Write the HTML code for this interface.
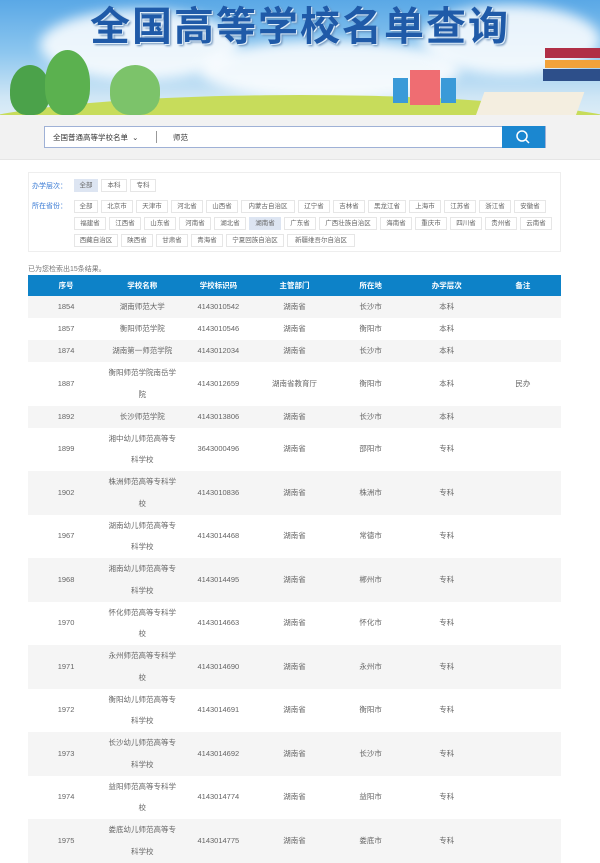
<!DOCTYPE html>
<html><head><meta charset="utf-8"><style>
*{margin:0;padding:0;box-sizing:border-box}
body{width:600px;height:859px;overflow:hidden;background:#fff;font-family:"Liberation Sans","Noto Sans CJK SC",sans-serif;color:#555;position:relative}
.banner{position:absolute;left:0;top:0;width:600px;height:130px;background:linear-gradient(180deg,#5aa8e6 0%,#8cc6ef 40%,#cfe6f5 75%,#e6f2f8 100%);overflow:hidden}
.cloud{position:absolute;background:#fff;border-radius:50%;opacity:.85;filter:blur(6px)}
.title{position:absolute;left:0;width:600px;top:-6px;text-align:center;font-size:40px;font-weight:bold;color:#1f5aa8;letter-spacing:2px;text-shadow:1px 1px 0 #dfeefa,2px 2px 2px #6a8fb8}
.grass{position:absolute;left:-50px;top:95px;width:700px;height:80px;border-radius:50% 50% 0 0;background:#c7dc5b}
.tree{position:absolute;border-radius:50% 50% 40% 40%;background:#4ba24a}
.sbar{position:absolute;left:0;top:115px;width:600px;height:45px;background:#f2f2f2;border-bottom:1px solid #e6e6e6}
.sbox{position:absolute;left:44px;top:126px;width:502px;height:22px;border:1px solid #9fb1d6;background:#fff;font-size:7.5px;color:#333}
.btn{position:absolute;right:0;top:-1px;width:43px;height:22px;background:#1b87d0}
.filter{position:absolute;left:28px;top:172px;width:533px;height:80px;border:1px solid #eee}
.lab{position:absolute;left:3px;font-size:7px;color:#3a7bd5}
.tag{position:absolute;height:13px;border:1px solid #e6e6e6;font-size:6.5px;line-height:11px;text-align:center;color:#666;background:#fff}
.tag.on{background:#dde5f2;border-color:#dde5f2}
.note{position:absolute;left:28px;top:264px;font-size:7px;color:#777}
table{position:absolute;left:28px;top:275px;width:533px;border-collapse:collapse;table-layout:fixed}
th{background:#0d82c8;color:#fff;font-size:7.5px;height:21px;font-weight:bold}
td{font-size:7.5px;text-align:center;color:#666;height:22px;line-height:22px}
tr.d td{height:43.5px;line-height:21.75px}
tr:nth-child(even) td{background:#f5f5f5}
</style></head><body>
<div class="banner">
<div class="cloud" style="left:40px;top:10px;width:200px;height:70px"></div>
<div class="cloud" style="left:200px;top:40px;width:260px;height:60px"></div>
<div class="cloud" style="left:420px;top:5px;width:180px;height:70px"></div>
<div class="grass"></div>
<div class="tree" style="left:10px;top:65px;width:40px;height:50px"></div>
<div class="tree" style="left:45px;top:50px;width:45px;height:65px;background:#5bb14f"></div>
<div class="tree" style="left:110px;top:65px;width:50px;height:50px;background:#7cc36a"></div>
<div style="position:absolute;left:393px;top:78px;width:15px;height:25px;background:#3a9ad8"></div>
<div style="position:absolute;left:410px;top:70px;width:30px;height:35px;background:#ef6d72"></div>
<div style="position:absolute;left:441px;top:78px;width:15px;height:25px;background:#3a9ad8"></div>
<div style="position:absolute;left:545px;top:48px;width:55px;height:10px;background:#b02f46"></div>
<div style="position:absolute;left:545px;top:60px;width:55px;height:8px;background:#f2a23a"></div>
<div style="position:absolute;left:543px;top:69px;width:57px;height:12px;background:#2d4f8a"></div>
<div style="position:absolute;left:480px;top:92px;width:100px;height:24px;background:#f4eee0;transform:skewX(-20deg)"></div>
<div class="title">全国高等学校名单查询</div>
</div>
<div class="sbar"></div>
<div class="sbox"><span style="position:absolute;left:8px;top:5px">全国普通高等学校名单 &nbsp;⌄</span><span style="position:absolute;left:111px;top:4px;width:1px;height:12px;background:#999"></span><span style="position:absolute;left:128px;top:5px">师范</span>
<div class="btn"><svg width="43" height="22"><circle cx="20" cy="10" r="5" fill="none" stroke="#fff" stroke-width="1.5"/><line x1="23.5" y1="13.5" x2="27" y2="17" stroke="#fff" stroke-width="1.5"/></svg></div></div>
<div class="filter">
<div class="lab" style="top:8px">办学层次：</div>
<div class="lab" style="top:28px">所在省份：</div>
<div class="tag on" style="left:45px;top:6px;width:24px">全部</div>
<div class="tag" style="left:72px;top:6px;width:26px">本科</div>
<div class="tag" style="left:101px;top:6px;width:26px">专科</div>
</div>
<div class="note">已为您检索出15条结果。</div>
<table>
<tr><th>序号</th><th>学校名称</th><th>学校标识码</th><th>主管部门</th><th>所在地</th><th>办学层次</th><th>备注</th></tr>
<tr><td>1854</td><td>湖南师范大学</td><td>4143010542</td><td>湖南省</td><td>长沙市</td><td>本科</td><td></td></tr>
<tr><td>1857</td><td>衡阳师范学院</td><td>4143010546</td><td>湖南省</td><td>衡阳市</td><td>本科</td><td></td></tr>
<tr><td>1874</td><td>湖南第一师范学院</td><td>4143012034</td><td>湖南省</td><td>长沙市</td><td>本科</td><td></td></tr>
<tr class="d"><td>1887</td><td>衡阳师范学院南岳学<br>院</td><td>4143012659</td><td>湖南省教育厅</td><td>衡阳市</td><td>本科</td><td>民办</td></tr>
<tr><td>1892</td><td>长沙师范学院</td><td>4143013806</td><td>湖南省</td><td>长沙市</td><td>本科</td><td></td></tr>
<tr class="d"><td>1899</td><td>湘中幼儿师范高等专<br>科学校</td><td>3643000496</td><td>湖南省</td><td>邵阳市</td><td>专科</td><td></td></tr>
<tr class="d"><td>1902</td><td>株洲师范高等专科学<br>校</td><td>4143010836</td><td>湖南省</td><td>株洲市</td><td>专科</td><td></td></tr>
<tr class="d"><td>1967</td><td>湖南幼儿师范高等专<br>科学校</td><td>4143014468</td><td>湖南省</td><td>常德市</td><td>专科</td><td></td></tr>
<tr class="d"><td>1968</td><td>湘南幼儿师范高等专<br>科学校</td><td>4143014495</td><td>湖南省</td><td>郴州市</td><td>专科</td><td></td></tr>
<tr class="d"><td>1970</td><td>怀化师范高等专科学<br>校</td><td>4143014663</td><td>湖南省</td><td>怀化市</td><td>专科</td><td></td></tr>
<tr class="d"><td>1971</td><td>永州师范高等专科学<br>校</td><td>4143014690</td><td>湖南省</td><td>永州市</td><td>专科</td><td></td></tr>
<tr class="d"><td>1972</td><td>衡阳幼儿师范高等专<br>科学校</td><td>4143014691</td><td>湖南省</td><td>衡阳市</td><td>专科</td><td></td></tr>
<tr class="d"><td>1973</td><td>长沙幼儿师范高等专<br>科学校</td><td>4143014692</td><td>湖南省</td><td>长沙市</td><td>专科</td><td></td></tr>
<tr class="d"><td>1974</td><td>益阳师范高等专科学<br>校</td><td>4143014774</td><td>湖南省</td><td>益阳市</td><td>专科</td><td></td></tr>
<tr class="d"><td>1975</td><td>娄底幼儿师范高等专<br>科学校</td><td>4143014775</td><td>湖南省</td><td>娄底市</td><td>专科</td><td></td></tr>
</table>
<div style="position:absolute;left:0;top:0">
<div class="tag" style="left:74px;top:200px;width:24px">全部</div>
<div class="tag" style="left:101px;top:200px;width:32px">北京市</div>
<div class="tag" style="left:136px;top:200px;width:32px">天津市</div>
<div class="tag" style="left:171px;top:200px;width:32px">河北省</div>
<div class="tag" style="left:206px;top:200px;width:32px">山西省</div>
<div class="tag" style="left:241px;top:200px;width:54px">内蒙古自治区</div>
<div class="tag" style="left:298px;top:200px;width:32px">辽宁省</div>
<div class="tag" style="left:333px;top:200px;width:32px">吉林省</div>
<div class="tag" style="left:368px;top:200px;width:38px">黑龙江省</div>
<div class="tag" style="left:409px;top:200px;width:32px">上海市</div>
<div class="tag" style="left:444px;top:200px;width:32px">江苏省</div>
<div class="tag" style="left:479px;top:200px;width:32px">浙江省</div>
<div class="tag" style="left:514px;top:200px;width:32px">安徽省</div>
<div class="tag" style="left:74px;top:217px;width:32px">福建省</div>
<div class="tag" style="left:109px;top:217px;width:32px">江西省</div>
<div class="tag" style="left:144px;top:217px;width:32px">山东省</div>
<div class="tag" style="left:179px;top:217px;width:32px">河南省</div>
<div class="tag" style="left:214px;top:217px;width:32px">湖北省</div>
<div class="tag on" style="left:249px;top:217px;width:32px">湖南省</div>
<div class="tag" style="left:284px;top:217px;width:32px">广东省</div>
<div class="tag" style="left:319px;top:217px;width:58px">广西壮族自治区</div>
<div class="tag" style="left:380px;top:217px;width:32px">海南省</div>
<div class="tag" style="left:415px;top:217px;width:32px">重庆市</div>
<div class="tag" style="left:450px;top:217px;width:32px">四川省</div>
<div class="tag" style="left:485px;top:217px;width:32px">贵州省</div>
<div class="tag" style="left:520px;top:217px;width:32px">云南省</div>
<div class="tag" style="left:74px;top:234px;width:44px">西藏自治区</div>
<div class="tag" style="left:121px;top:234px;width:32px">陕西省</div>
<div class="tag" style="left:156px;top:234px;width:32px">甘肃省</div>
<div class="tag" style="left:191px;top:234px;width:32px">青海省</div>
<div class="tag" style="left:226px;top:234px;width:58px">宁夏回族自治区</div>
<div class="tag" style="left:287px;top:234px;width:68px">新疆维吾尔自治区</div>
</div>
</body></html>
